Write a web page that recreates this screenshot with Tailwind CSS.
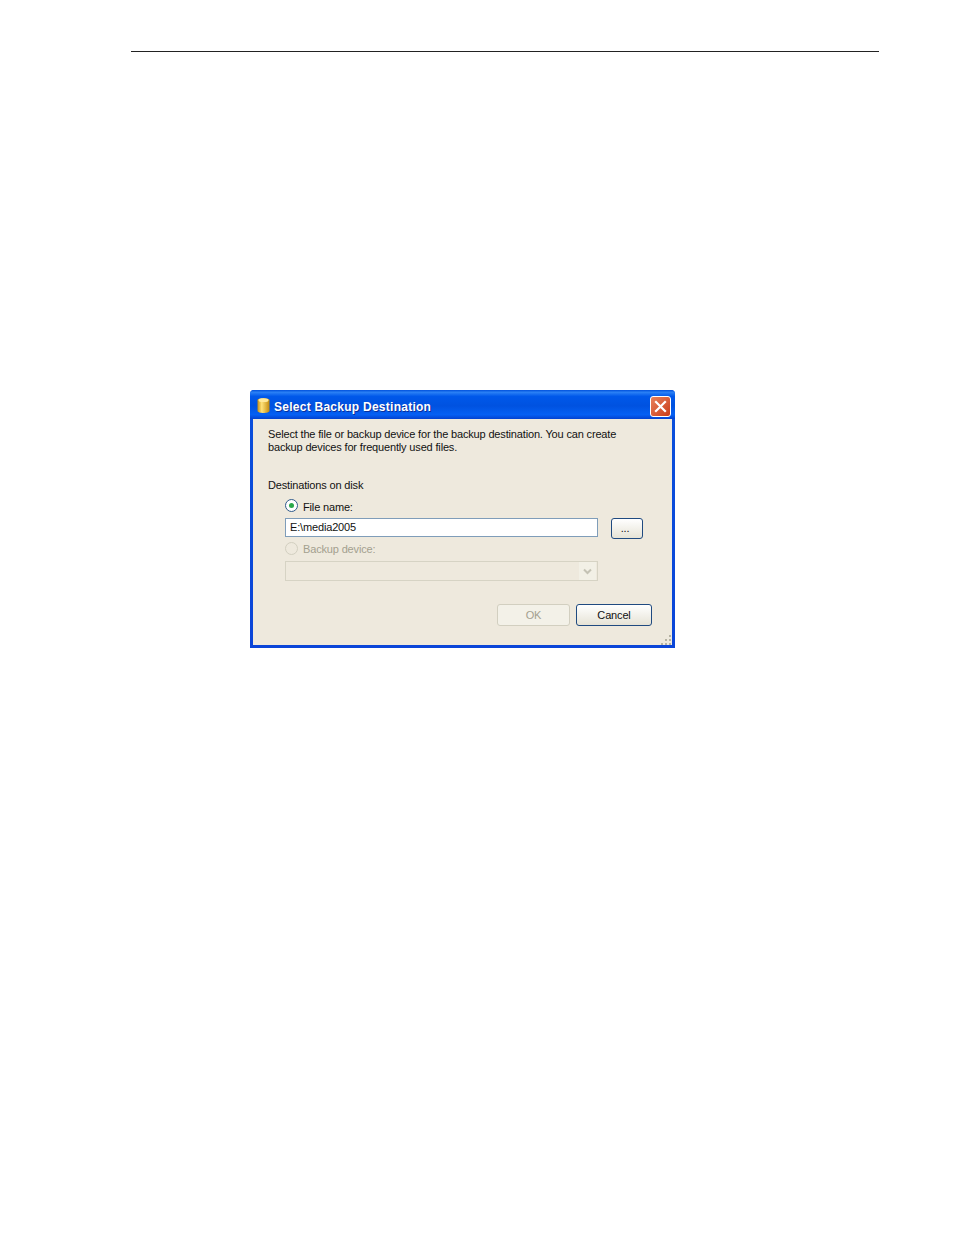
<!DOCTYPE html>
<html lang="en">
<head>
  <meta charset="UTF-8">
  <title>Select Backup Destination</title>
  <script src="https://cdn.jsdelivr.net/npm/@tailwindcss/browser@4"></script>
</head>
<body class="bg-white">
  <div class="w-[954px] h-[1235px] overflow-hidden font-['Liberation_Sans',sans-serif] text-[11px] tracking-[-0.16px] leading-[13px] text-[#111]">
    <!-- Page header rule -->
    <div class="ml-[131px] mt-[51px] w-[748px] h-px bg-[#222]"></div>

    <!-- Dialog -->
    <div class="ml-[250px] mt-[338px] w-[425px] h-[258px] flex flex-col rounded-t-[4px] overflow-hidden bg-gradient-to-b from-[#0a4fdc] to-[#0a45d8]">
      <!-- Title bar -->
      <div class="h-[29px] shrink-0 flex items-center pt-[4px] pl-[7px] pr-[4px] bg-[linear-gradient(180deg,#0050dc_0%,#2a80f5_8%,#0058ea_22%,#0052e0_55%,#0560f4_85%,#0342d0_100%)]">
        <svg class="-mt-[2px] w-[13px] h-[17px] shrink-0" viewBox="0 0 13 16" preserveAspectRatio="none">
          <defs>
            <linearGradient id="can" x1="0" x2="1" y1="0" y2="0">
              <stop offset="0" stop-color="#c98f10"/>
              <stop offset="0.35" stop-color="#ffe27a"/>
              <stop offset="1" stop-color="#c48a0c"/>
            </linearGradient>
          </defs>
          <path d="M0.5 3 C0.5 0.6 12.5 0.6 12.5 3 V13 C12.5 15.8 0.5 15.8 0.5 13 Z" fill="url(#can)"/>
          <ellipse cx="6.5" cy="3" rx="5" ry="1.8" fill="#ffe99a"/>
        </svg>
        <span class="ml-[4px] mt-[2px] text-white font-bold text-[12px] tracking-[0.26px] [text-shadow:1px_1px_0_#0a2f9a]">Select Backup Destination</span>
        <div class="ml-auto w-[21px] h-[21px] rounded-[3px] border border-white bg-gradient-to-br from-[#e8805a] to-[#c93a14] flex items-center justify-center">
          <svg class="w-[13px] h-[13px]" viewBox="0 0 13 13"><path d="M2 2 L11 11 M11 2 L2 11" stroke="#fff" stroke-width="2.2" stroke-linecap="square" fill="none"/></svg>
        </div>
      </div>

      <!-- Body -->
      <div class="relative flex-1 mx-[3px] mb-[3px] bg-[#eee9dd] pl-[15px] pt-[9px]">
        <p>Select the file or backup device for the backup destination. You can create<br>backup devices for frequently used files.</p>
        <p class="mt-[25px]">Destinations on disk</p>

        <div class="ml-[17px] mt-[9px] w-[358px]">
          <div class="flex items-center h-[13px]">
            <div class="-mt-[4px] w-[13px] h-[13px] rounded-full border border-[#2f5a8a] bg-white flex items-center justify-center">
              <div class="w-[5px] h-[5px] rounded-full bg-[#2aa84a]"></div>
            </div>
            <span class="ml-[5px]">File name:</span>
          </div>

          <div class="flex mt-[4px]">
            <div class="w-[313px] h-[19px] border border-[#7f9db9] bg-white pl-[4px] flex items-center">E:\media2005</div>
            <div class="ml-[13px] w-[32px] h-[21px] rounded-[3px] border border-[#1f4a80] bg-gradient-to-b from-white to-[#e6e3d6] flex items-center justify-center pr-[4px]">...</div>
          </div>

          <div class="flex items-center h-[13px] mt-[4px] text-[#a3a08f]">
            <div class="-mt-[2px] w-[13px] h-[13px] rounded-full border border-[#d2cfc0]"></div>
            <span class="ml-[5px]">Backup device:</span>
          </div>

          <div class="mt-[5px] w-[313px] h-[20px] border border-[#d6d3c4] flex justify-end items-center pr-px">
            <div class="w-[17px] h-[18px] bg-[#f2f0e6] flex items-center justify-center">
              <svg class="w-[9px] h-[7px]" viewBox="0 0 9 7"><path d="M1 1.5 L4.5 5 L8 1.5" stroke="#c4c2b4" stroke-width="2" fill="none"/></svg>
            </div>
          </div>
        </div>

        <!-- Buttons -->
        <div class="flex justify-end mt-[23px] pr-[20px] gap-[6px]">
          <div class="w-[73px] h-[22px] rounded-[3px] border border-[#d2cfc0] bg-[#f3f1e8] text-[#a3a08f] flex items-center justify-center">OK</div>
          <div class="w-[76px] h-[22px] rounded-[3px] border border-[#1f4a80] bg-gradient-to-b from-white to-[#e6e3d6] flex items-center justify-center">Cancel</div>
        </div>

        <!-- Resize grip -->
        <svg class="absolute right-0 bottom-0 w-[11px] h-[11px]" viewBox="0 0 11 11" fill="#b5b2a2">
          <rect x="8" y="1" width="2" height="2"/><rect x="4" y="5" width="2" height="2"/><rect x="8" y="5" width="2" height="2"/>
          <rect x="0" y="9" width="2" height="2"/><rect x="4" y="9" width="2" height="2"/><rect x="8" y="9" width="2" height="2"/>
        </svg>
      </div>
    </div>
  </div>
</body>
</html>
